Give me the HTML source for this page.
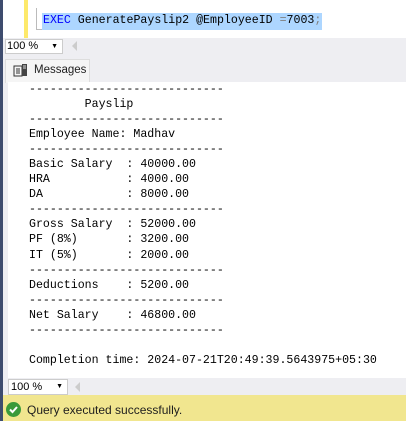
<html><head><style>
body{margin:0;width:406px;height:421px;position:relative;overflow:hidden;background:#eeeef2;font-family:"Liberation Sans",sans-serif}
.a{position:absolute}
.m{font-family:"Liberation Mono",monospace;font-size:11.6px;white-space:pre;color:#000}
</style></head><body>
<div class="a" style="left:0;top:0;width:3px;height:421px;background:#3e4c6e"></div>
<div class="a" style="left:3px;top:0;width:403px;height:38px;background:#fff"></div>
<div class="a" style="left:24px;top:0;width:4px;height:38px;background:#fde96b"></div>
<div class="a" style="left:36px;top:8px;width:1px;height:22px;background:#bbb"></div>
<div class="a" style="left:37px;top:29px;width:5px;height:1px;background:#bbb"></div>
<div class="a" style="left:42px;top:13px;width:280px;height:17px;background:#add6ff"></div>
<div class="a m" style="left:43px;top:14px;font-size:11.6px"><span style="color:#0000ff">EXEC</span> GeneratePayslip2 @EmployeeID <span style="color:#808080">=</span>7003<span style="color:#808080">;</span></div>
<div class="a" style="left:3px;top:38px;width:403px;height:17px;background:#eeeef2"></div>
<div class="a" style="left:5px;top:39px;width:58px;height:15px;background:#fff;border:1px solid #ccc;box-sizing:border-box;font-size:11px;line-height:13px;padding-left:1px">100 %<span style="position:absolute;right:4px;top:0;font-size:7px">▼</span></div>
<div class="a" style="left:72px;top:41px;width:0;height:0;border:5px solid transparent;border-right-color:#ccc;border-left:0"></div>
<div class="a" style="left:5px;top:59px;width:85px;height:24px;background:#f5f5f5;border:1px solid #ddd;border-bottom:none;box-sizing:border-box"></div>
<svg class="a" style="left:13px;top:62px" width="16" height="16" viewBox="0 0 16 16"><rect x="1" y="4" width="8" height="10" fill="none" stroke="#333"/><path d="M3 7h4M3 9h4M3 11h4" stroke="#333"/><rect x="9" y="2" width="5" height="12" fill="#444"/><path d="M10 4h3M10 6h3" stroke="#ddd"/></svg>
<div class="a" style="left:34px;top:64px;font-size:11.5px;color:#1e1e1e">Messages</div>
<div class="a" style="left:8px;top:82px;width:398px;height:296px;background:#fff"></div>
<div class="a m" style="left:29px;top:82px;line-height:15.05px">----------------------------
        Payslip
----------------------------
Employee Name: Madhav
----------------------------
Basic Salary  : 40000.00
HRA           : 4000.00
DA            : 8000.00
----------------------------
Gross Salary  : 52000.00
PF (8%)       : 3200.00
IT (5%)       : 2000.00
----------------------------
Deductions    : 5200.00
----------------------------
Net Salary    : 46800.00
----------------------------

Completion time: 2024-07-21T20:49:39.5643975+05:30</div>
<div class="a" style="left:8px;top:378px;width:398px;height:17px;background:#eeeef2"></div>
<div class="a" style="left:8px;top:379px;width:60px;height:16px;background:#fff;border:1px solid #ccc;box-sizing:border-box;font-size:11px;line-height:14px;padding-left:2px">100 %<span style="position:absolute;right:4px;top:0;font-size:7px">▼</span></div>
<div class="a" style="left:75px;top:382px;width:0;height:0;border:5px solid transparent;border-right-color:#ccc;border-left:0"></div>
<div class="a" style="left:3px;top:395px;width:403px;height:26px;background:#f1e68f"></div>
<div class="a" style="left:6px;top:402px;width:15px;height:15px;border-radius:50%;background:#3a9a3a"></div>
<svg class="a" style="left:6px;top:402px" width="15" height="15"><path d="M4 7.5l2.5 2.5 4.5-5" stroke="#fff" stroke-width="2" fill="none"/></svg>
<div class="a" style="left:27px;top:403px;font-size:12px;color:#1e1e1e">Query executed successfully.</div>
</body></html>
